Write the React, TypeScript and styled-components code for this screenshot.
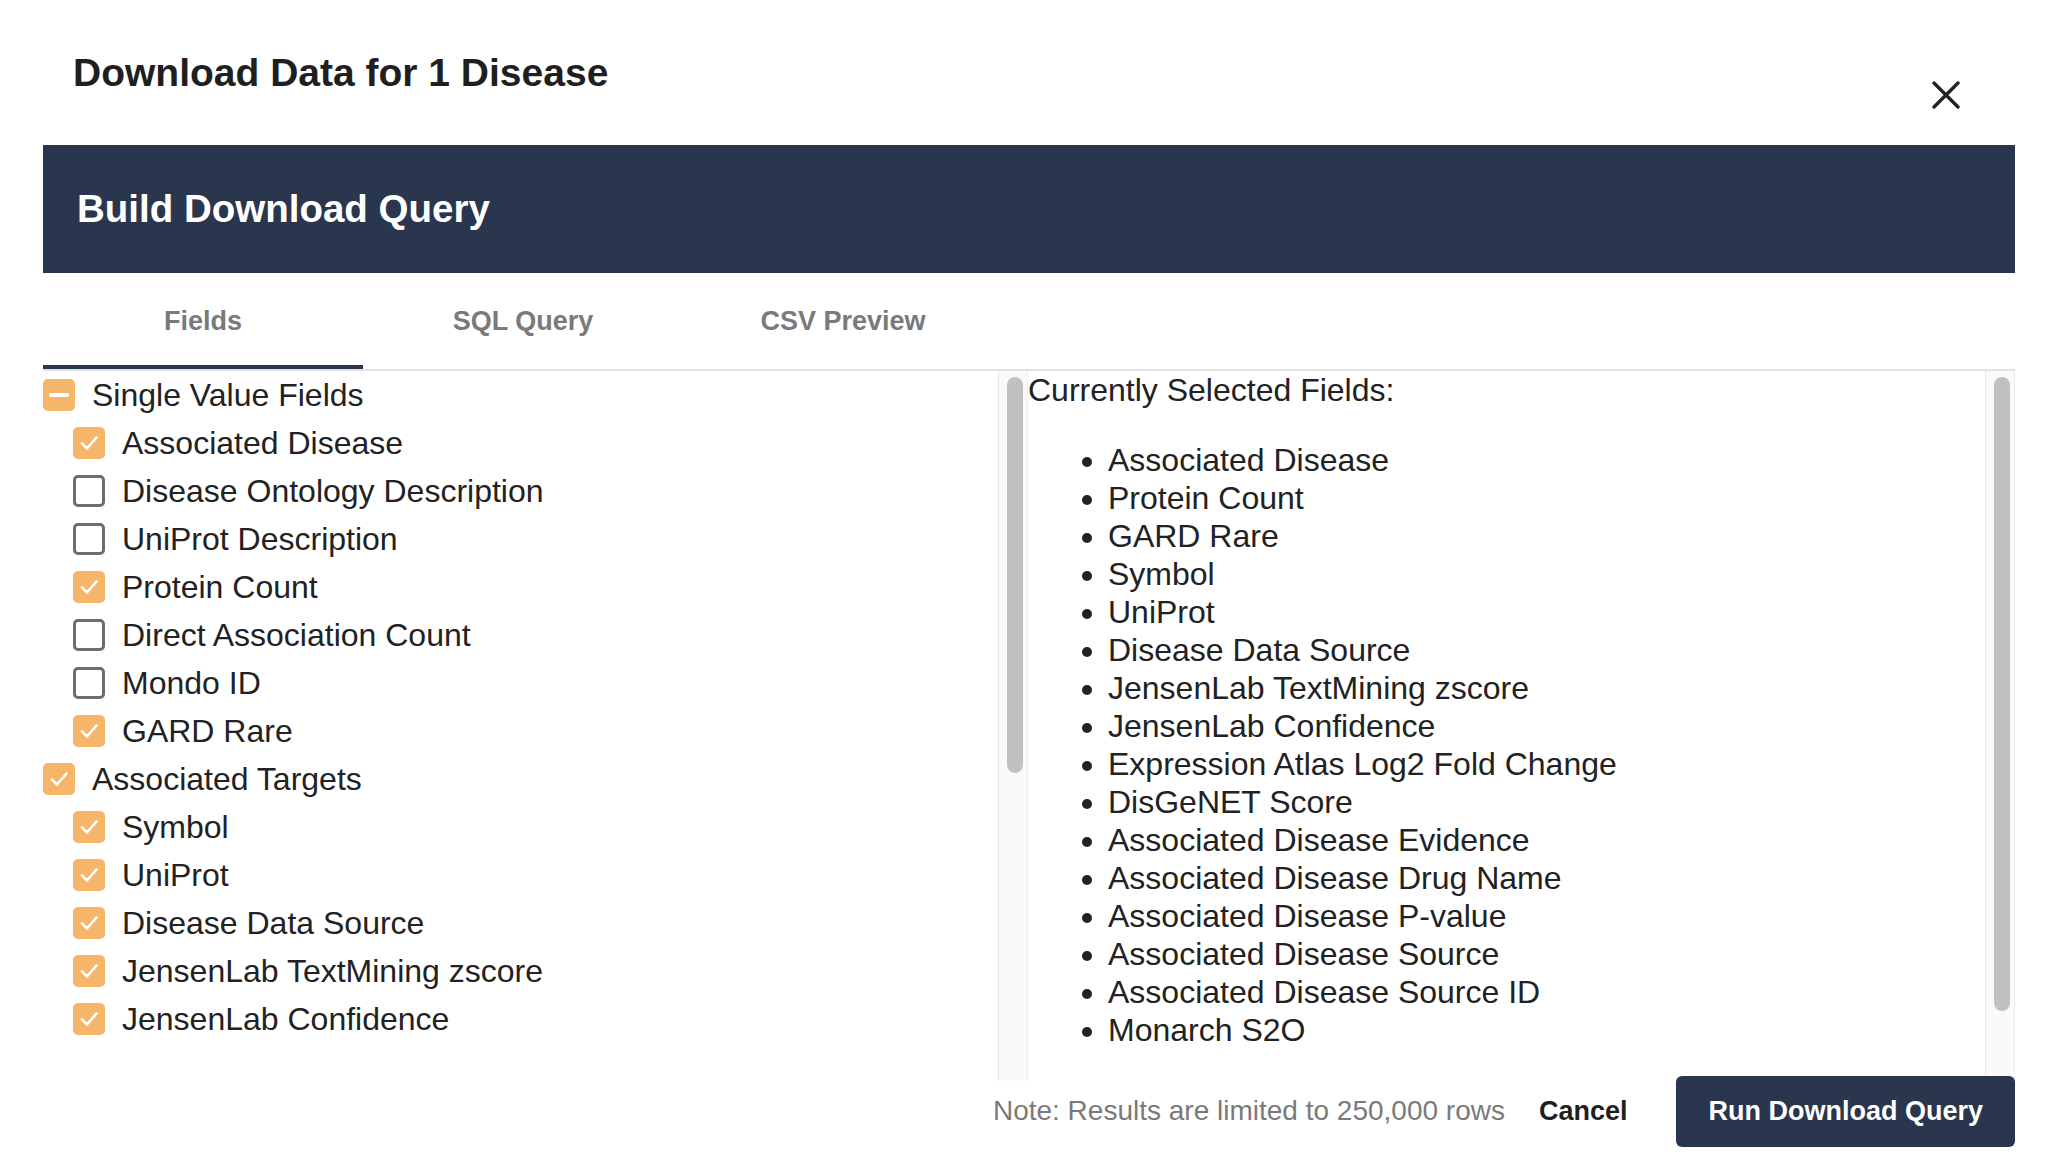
import React from "react";
import styled, { createGlobalStyle, css } from "styled-components";

type FieldState = "checked" | "unchecked" | "partial";

interface Field {
  label: string;
  checked: boolean;
}

interface Group {
  label: string;
  fields: Field[];
}

interface TreeRow {
  label: string;
  state: FieldState;
  child: boolean;
}

const groups: Group[] = [
  {
    label: "Single Value Fields",
    fields: [
      { label: "Associated Disease", checked: true },
      { label: "Disease Ontology Description", checked: false },
      { label: "UniProt Description", checked: false },
      { label: "Protein Count", checked: true },
      { label: "Direct Association Count", checked: false },
      { label: "Mondo ID", checked: false },
      { label: "GARD Rare", checked: true },
    ],
  },
  {
    label: "Associated Targets",
    fields: [
      { label: "Symbol", checked: true },
      { label: "UniProt", checked: true },
      { label: "Disease Data Source", checked: true },
      { label: "JensenLab TextMining zscore", checked: true },
      { label: "JensenLab Confidence", checked: true },
      { label: "Expression Atlas Log2 Fold Change", checked: true },
      { label: "DisGeNET Score", checked: true },
      { label: "Associated Disease Evidence", checked: true },
      { label: "Associated Disease Drug Name", checked: true },
      { label: "Associated Disease P-value", checked: true },
      { label: "Associated Disease Source", checked: true },
      { label: "Associated Disease Source ID", checked: true },
      { label: "Monarch S2O", checked: true },
    ],
  },
];

const groupState = (group: Group): FieldState => {
  const count = group.fields.filter((f) => f.checked).length;
  if (count === 0) return "unchecked";
  if (count === group.fields.length) return "checked";
  return "partial";
};

const treeRows: TreeRow[] = groups.flatMap((g) => [
  { label: g.label, state: groupState(g), child: false },
  ...g.fields.map((f) => ({
    label: f.label,
    state: (f.checked ? "checked" : "unchecked") as FieldState,
    child: true,
  })),
]);

const selected = groups.flatMap((g) => g.fields.filter((f) => f.checked));

// the panel is 679px tall; rows are 48px, so 14 rows are in view
const ROW_HEIGHT = 48;
const PANEL_HEIGHT = 679;
const visibleRows = treeRows.slice(0, Math.floor(PANEL_HEIGHT / ROW_HEIGHT));

function CheckIcon({ state }: { state: FieldState }) {
  return (
    <Box $state={state}>
      {state === "checked" && (
        <svg width="22" height="22" viewBox="0 0 22 22">
          <polyline
            points="4,11.5 9,16.5 18.5,5.5"
            fill="none"
            stroke="#fff"
            strokeWidth="2.6"
            strokeLinecap="round"
            strokeLinejoin="round"
          />
        </svg>
      )}
      {state === "partial" && <Dash />}
    </Box>
  );
}

export default function App() {
  return (
    <>
      <GlobalStyle />
      <Modal>
        <TitleRow>
          <Title>Download Data for 1 Disease</Title>
          <CloseButton aria-label="Close">
            <svg width="28" height="28" viewBox="0 0 28 28">
              <path
                d="M2 2 L26 26 M26 2 L2 26"
                stroke="#222"
                strokeWidth="3.4"
                strokeLinecap="round"
              />
            </svg>
          </CloseButton>
        </TitleRow>

        <Banner>
          <BannerTitle>Build Download Query</BannerTitle>
        </Banner>

        <Tabs>
          <Tab $active>Fields</Tab>
          <Tab>SQL Query</Tab>
          <Tab>CSV Preview</Tab>
        </Tabs>

        <Body>
          <Panel>
            <PanelContent>
              {visibleRows.map((row) => (
                <Row key={row.label} $child={row.child}>
                  <CheckIcon state={row.state} />
                  <Label>{row.label}</Label>
                </Row>
              ))}
            </PanelContent>
            <ScrollTrack>
              <Thumb $size={396} />
            </ScrollTrack>
          </Panel>

          <Panel>
            <PanelContent>
              <SelectedHeading>Currently Selected Fields:</SelectedHeading>
              <SelectedList>
                {selected.map((f) => (
                  <li key={f.label}>{f.label}</li>
                ))}
              </SelectedList>
            </PanelContent>
            <ScrollTrack>
              <Thumb $size={634} />
            </ScrollTrack>
          </Panel>
        </Body>

        <Footer>
          <Note>Note: Results are limited to 250,000 rows</Note>
          <CancelButton>Cancel</CancelButton>
          <RunButton>Run Download Query</RunButton>
        </Footer>
      </Modal>
    </>
  );
}

const GlobalStyle = createGlobalStyle`
  html, body {
    margin: 0;
    padding: 0;
    background: #fff;
  }
  body {
    font-family: "Liberation Sans", Arial, Helvetica, sans-serif;
    color: #222;
  }
  * {
    box-sizing: border-box;
  }
`;

const navy = "#29364e";
const orange = "#f5b66a";

const Modal = styled.div`
  width: 2058px;
  height: 1166px;
  padding: 0 43px 0 43px;
  display: flex;
  flex-direction: column;
  overflow: hidden;
`;

const TitleRow = styled.div`
  height: 145px;
  flex-shrink: 0;
  display: flex;
  justify-content: space-between;
  align-items: flex-start;
`;

const Title = styled.h1`
  margin: 50px 0 0 30px;
  font-size: 39px;
  line-height: 46px;
  font-weight: 700;
  color: #1f1f1f;
`;

const CloseButton = styled.button`
  width: 48px;
  height: 48px;
  margin: 71px 45px 0 0;
  padding: 0;
  border: none;
  background: transparent;
  display: flex;
  align-items: center;
  justify-content: center;
  cursor: pointer;
`;

const Banner = styled.div`
  height: 128px;
  flex-shrink: 0;
  background: ${navy};
  display: flex;
  align-items: center;
  padding-left: 34px;
`;

const BannerTitle = styled.h2`
  margin: 0;
  font-size: 38.5px;
  font-weight: 700;
  color: #fff;
`;

const Tabs = styled.div`
  height: 98px;
  flex-shrink: 0;
  display: flex;
  border-bottom: 2px solid #e2e2e2;
`;

const Tab = styled.div<{ $active?: boolean }>`
  position: relative;
  width: 320px;
  display: flex;
  align-items: center;
  justify-content: center;
  font-size: 27px;
  font-weight: 700;
  color: #7a7a7a;
  cursor: pointer;
  ${(p) =>
    p.$active &&
    css`
      &::after {
        content: "";
        position: absolute;
        left: 0;
        right: 0;
        bottom: 0;
        height: 4px;
        background: ${navy};
      }
    `}
`;

const Body = styled.div`
  height: ${PANEL_HEIGHT}px;
  flex-shrink: 0;
  display: grid;
  grid-template-columns: 985px 1fr;
`;

const Panel = styled.div`
  display: flex;
  min-width: 0;
  height: 100%;
`;

const PanelContent = styled.div`
  flex: 1;
  min-width: 0;
  overflow: hidden;
`;

const ScrollTrack = styled.div`
  width: 30px;
  flex-shrink: 0;
  background: #fafafa;
  border-left: 1px solid #e6e6e6;
  border-right: 1px solid #ececec;
  padding: 6px 3px 0 8px;
`;

const Thumb = styled.div<{ $size: number }>`
  width: 16px;
  height: ${(p) => p.$size}px;
  border-radius: 8px;
  background: #c1c1c1;
`;

const Row = styled.div<{ $child?: boolean }>`
  height: ${ROW_HEIGHT}px;
  display: flex;
  align-items: center;
  padding-left: ${(p) => (p.$child ? "30px" : "0")};
`;

const Box = styled.span<{ $state: FieldState }>`
  width: 32px;
  height: 32px;
  flex-shrink: 0;
  border-radius: 5px;
  display: flex;
  align-items: center;
  justify-content: center;
  ${(p) =>
    p.$state === "unchecked"
      ? css`
          border: 3px solid #6e6e6e;
          background: #fff;
        `
      : css`
          background: ${orange};
        `}
`;

const Dash = styled.span`
  width: 20px;
  height: 4px;
  border-radius: 2px;
  background: #fff;
`;

const Label = styled.span`
  margin-left: 17px;
  font-size: 32px;
  color: #222;
  white-space: nowrap;
`;

const SelectedHeading = styled.div`
  font-size: 32px;
  line-height: 38px;
  color: #222;
`;

const SelectedList = styled.ul`
  margin: 32px 0;
  padding-left: 80px;
  font-size: 32px;
  line-height: 38px;
  color: #222;
  list-style: disc;
`;

const Footer = styled.div`
  flex: 1;
  display: flex;
  justify-content: flex-end;
  align-items: center;
  padding-top: 6px;
`;

const Note = styled.span`
  font-size: 28px;
  color: #7a7a7a;
  margin-right: 34px;
`;

const CancelButton = styled.button`
  margin-right: 49px;
  padding: 0;
  border: none;
  background: transparent;
  font-family: inherit;
  font-size: 27px;
  font-weight: 700;
  color: #1f1f1f;
  cursor: pointer;
`;

const RunButton = styled.button`
  height: 71px;
  padding: 0 32px;
  border: none;
  border-radius: 6px;
  background: ${navy};
  font-family: inherit;
  font-size: 27px;
  font-weight: 700;
  color: #fff;
  cursor: pointer;
`;
